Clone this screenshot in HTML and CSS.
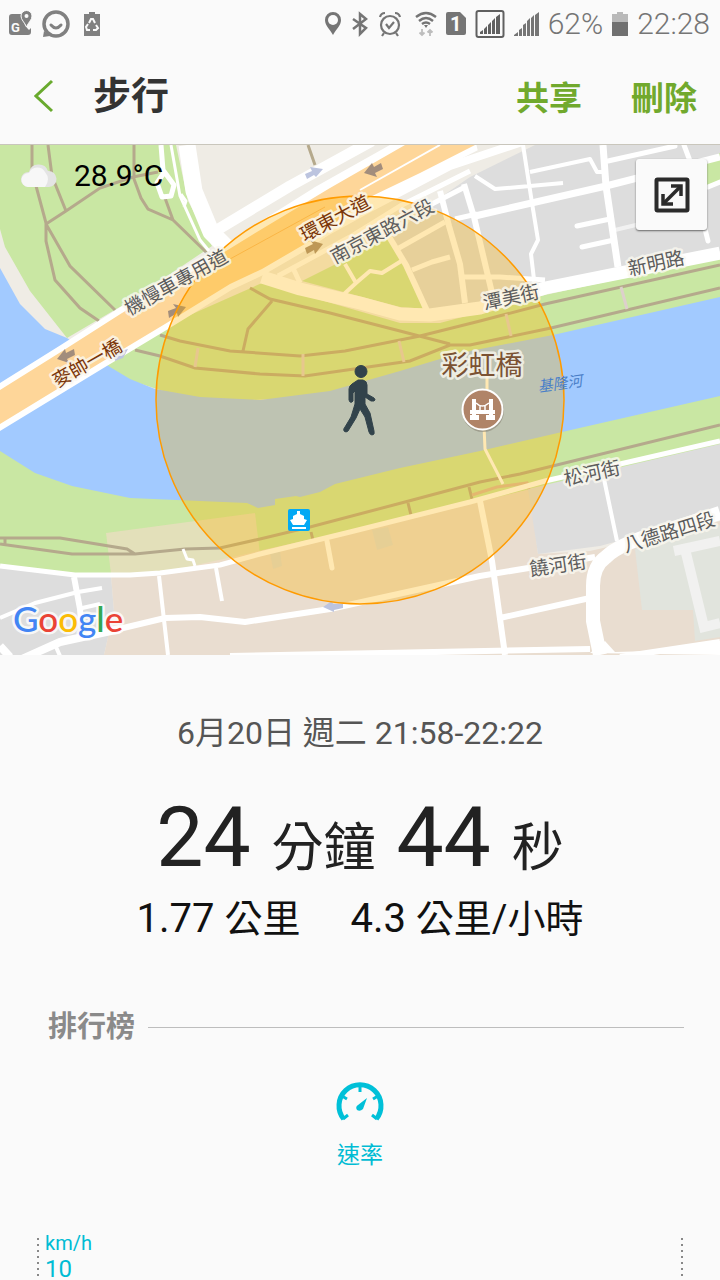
FILE: index.html
```
<!DOCTYPE html>
<html lang="zh-Hant">
    <head>
        <meta charset="utf-8">
        <meta name="viewport" content="width=device-width, initial-scale=1">
        <title>步行</title>
        <link rel="stylesheet" href="styles.css">
    </head>
    <body>
        <div class="status-bar">
            <div class="status-group notifications">
                <svg width="24" height="28" viewBox="0 0 24 28" fill="#808080">
                    <path d="M3 4h12v3c-1 5 1 9 5 13l2-2v4q0 3-3 3H3q-3 0-3-3V7q0-3 3-3z"/>
                    <path d="M17.500 0.500a5.500 5.500 0 0 1 5.500 5.500c0 4-3.500 6-5.500 11-2-5-5.500-7-5.500-11a5.500 5.500 0 0 1 5.500-5.500z" stroke="#fafafa" stroke-width="1"/>
                    <circle cx="17.500" cy="6" r="2" fill="#fafafa"/>
                    <text class="icon-letter" x="2" y="22" font-size="13">G</text>
                </svg>
                <svg width="30" height="28" viewBox="0 0 30 28" fill="none" stroke="#808080">
                    <circle cx="15" cy="14" r="12" stroke-width="3.500"/>
                    <path d="M10 15q5 6 10 0" stroke-width="3" stroke-linecap="round"/>
                    <path d="M3 21l-1 6 7-1z" fill="#808080" stroke="none"/>
                </svg>
                <svg width="18" height="28" viewBox="0 0 18 28">
                    <path d="M1 4h5V2h6v2h5v22H1z" fill="#808080"/>
                    <path d="M6 13l2-4h2l2 4M13 15l2 3-2 2h-3M7 20H4l-1-3 2-3" fill="none" stroke="#fafafa" stroke-width="2"/>
                </svg>
            </div>
            <div class="status-group">
                <svg width="18" height="26" viewBox="0 0 18 26">
                    <path d="M9 1a8 8 0 0 1 8 8c0 6-5 9-8 15C6 18 1 15 1 9a8 8 0 0 1 8-8z" fill="#757575"/>
                    <circle cx="9" cy="9" r="5" fill="#fafafa"/>
                </svg>
                <svg width="18" height="26" viewBox="0 0 18 26" fill="none" stroke="#757575" stroke-width="2.500">
                    <path d="M2 8l13 9-6 6V3l6 5L2 18"/>
                </svg>
                <svg width="24" height="26" viewBox="0 0 24 26" fill="none" stroke="#757575" stroke-width="2.200">
                    <circle cx="12" cy="14" r="9"/>
                    <path d="M8 13l3 4 5-6M2 6q1-4 5-4M22 6q-1-4-5-4M6 22l-2 3M18 22l2 3"/>
                </svg>
                <svg class="wifi" width="22" height="26" viewBox="0 0 22 26" fill="none" stroke="#757575" stroke-width="2.400">
                    <path d="M1 6q10-8 20 0M4 10q7-6 14 0M7 13q4-3 8 0"/>
                    <path d="M9 14h4l-2 3z" fill="#757575" stroke="none"/>
                    <path d="M7 18v6M4.500 21.500L7 24l2.500-2.500M15 25v-6M12.500 21.500L15 19l2.500 2.500" stroke="#bdbdbd" stroke-width="1.800"/>
                </svg>
                <svg width="20" height="26" viewBox="0 0 20 26">
                    <path d="M2 1h12l6 6v15q0 2-2 2H2q-2 0-2-2V3q0-2 2-2z" fill="#757575"/>
                    <text class="icon-letter" x="4" y="20" font-size="20">1</text>
                </svg>
                <svg width="30" height="30" viewBox="0 0 30 30">
                    <rect x="1.500" y="2" width="27" height="26" rx="2" fill="none" stroke="#606060" stroke-width="2"/>
                    <path d="M5 25v-2l3-2v4zM9 25v-5l3-3v8zM13 25v-9l3-3v12zM17 25V12l3-3v16zM21 25V8l4-3v20z" fill="#606060"/>
                </svg>
                <svg width="25" height="26" viewBox="0 0 25 26">
                    <path d="M0 25v-1l4-3v4zM5 25v-6l3-2v8zM9 25V14l3-2v13zM13 25v-15l3-3v18zM17 25V7l3-3v21zM21 25V4l4-3v24z" fill="#757575"/>
                </svg>
                <span>62%</span>
                <svg width="16" height="26" viewBox="0 0 16 26">
                    <path d="M0 3h5V1h6v2h5v9H0z" fill="#b9b9b9"/>
                    <path d="M0 11h16v14H0z" fill="#707070"/>
                </svg>
                <span>22:28</span>
            </div>
        </div>

        <header class="app-bar">
            <button class="back" aria-label="返回">
                <svg width="20" height="34" viewBox="0 0 20 34">
                    <path d="M18 2L2 17l16 15" fill="none" stroke="#69aa2e" stroke-width="3"/>
                </svg>
            </button>
            <h1>步行</h1>
            <button class="action">共享</button>
            <button class="action">刪除</button>
        </header>

        <section class="map">
            <svg class="map-drawing" viewBox="0 144 720 510">
                <rect y="144" width="720" height="510" fill="#efece5"/>

                <!-- land -->
                <path class="park" d="M0 144H176L188 200 212 245 130 300 67 337 30 290 5 246 0 228z"/>
                <path class="block" d="M470 176L535 144H720V250L545 287 430 316 380 246 428 205z"/>
                <path class="park" d="M302 280L390 236 428 308 400 306z"/>
                <path class="park" d="M90 360L165 325 262 282 400 322 440 322 545 294 720 256V300L470 352 400 372 340 394 200 402 120 376z"/>
                <path class="park" d="M707 158L720 152V181L707 184z"/>
                <path class="park" d="M0 445L130 490 260 500 335 480 720 390V445L470 505 220 566 130 576 75 576 0 567z"/>
                <path class="block" d="M0 565L75 574 111 574 114 610 104 654H0z"/>
                <path class="sand" d="M111 574L160 572 470 503 530 488 538 553 590 550 720 520V654H104L114 610z"/>
                <path class="block" d="M528 488L720 443V512L600 545 538 553z"/>
                <path d="M635 548L720 524V636L695 640 693 609H642z" fill="#e1e4dd"/>
                <path d="M106 532L255 512 260 553 160 573 111 573z" fill="#eeddc3" opacity=".7"/>
                <path d="M270 552l10-2 2 15-9 3zM372 529l16-3 5 18-16 5z" fill="#dcdcd6"/>

                <!-- river -->
                <path class="water" d="M0 267L20 303 45 328 67 337 110 366 130 378 155 388 200 396 260 399 330 390 400 370 440 358 470 350 553 334 720 296V395L562 431 480 450 400 467 335 483 320 491 300 496 296 495 275 498V504L258 507 247 502 200 500 130 497 72 485 35 472 0 450z"/>

                <!-- footpaths -->
                <g class="footpath">
                    <path d="M32 144V170L46 222V240L55 279 80 307 99 320M48 144L52 175 66 210M46 223L66 210 100 187 133 176 158 171M134 144V178L141 197 148 208 173 219 207 252M46 223L70 265 115 309M165 197L173 219M308 144L315 164"/>
                    <path d="M160 334L180 340 230 350 300 355 345 350 420 335 480 320 545 303 720 264M135 349L160 355 195 367 260 373 305 375 410 360 450 344 470 344 551 327 720 287M250 287L270 298 330 312 400 330 450 343M272 300L248 328 243 350"/>
                    <path d="M0 537H60L127 548 135 553M0 543L72 553H135L185 548 220 547 260 538 310 526 405 501 480 481 520 473 720 424M5 538v6M311 531l2 8M408 502l3 12M469 486l3 12"/>
                </g>
                <path d="M303 353v22M198 347l-3 19M399 340l5 21M506 313l5 22M621 286l6 22" fill="none" stroke="#ddd0cb" stroke-width="3"/>
                <path d="M472 494l25-8 30-4 2 6" fill="none" stroke="#d8b9a0" stroke-width="3"/>

                <!-- streets -->
                <g class="street">
                    <path stroke-width="13" d="M262 276L300 288 360 302 400 313 430 314 480 307 545 287 720 252"/>
                    <path stroke-width="17" d="M187 144L194 190 211 231 236 256"/>
                    <path stroke-width="5" d="M161 144L163 169 174 184 171 195 162 196 157 182 165 170"/>
                    <path stroke-width="3" d="M171 144L180 195 200 239 209 250M181 193l5 7-2 6"/>
                    <path stroke-width="11" d="M212 232L290 185 372 140"/>
                    <path stroke-width="5" d="M250 230L315 189 395 144M350 205L430 163 475 144M278 275L350 236 400 205 470 170M300 282L293 267"/>
                    <path stroke-width="8" d="M255 270L370 207 450 165 525 140"/>
                    <path stroke-width="4" d="M345 263L356 282 370 270 382 272 403 259M343 294L356 282"/>
                    <path stroke-width="6" d="M388 234L406 264 428 312M440 190L449 225 460 263 465 302M464 183L474 216 492 292"/>
                    <path stroke-width="5" d="M399 247L445 221M412 269L432 261 450 256M460 276H500L545 279M428 205L465 186M455 218l22-5"/>
                    <path stroke-width="4" d="M523 144L532 202 538 239 531 253 535 287M475 175L495 188 530 185 563 182M530 171L590 158 597 171H603"/>
                    <path stroke-width="7" d="M603 144L606 185 618 266M475 215L606 185 720 156"/>
                    <path stroke-width="5" stroke-linecap="round" d="M577 225L610 218M582 246L614 239M608 160L675 145M684 144L690 160M703 220L708 240M708 186L720 181"/>
                    <path stroke-width="4" d="M615 229L640 223" opacity=".6"/>
                    <path stroke-width="5" d="M0 565L75 574H130L160 572 220 564 260 553 350 531 470 501 545 480 620 463 720 440"/>
                    <path stroke-width="6" d="M74 576L80 608 81 620M119 628L165 617 200 616 245 621 330 608 480 575 595 556M480 500L492 560 505 654M500 617L590 597"/>
                    <path stroke-width="4" d="M159 575L168 654M216 567L222 600M0 617L35 602 78 591 102 587M78 608L100 603M56 646l4 9M604 478L617 540"/>
                    <path stroke-width="3" d="M183 548l4 10 6 1 2 6"/>
                    <path stroke-width="5" stroke-linecap="round" d="M327 540L332 567"/>
                    <path stroke-width="3" d="M487 375V390M484 425L485 448 503 483"/>
                    <path stroke-width="8" d="M22 658L60 641 120 628M0 645L10 656"/>
                    <path stroke-width="14" d="M600 654L593 620V585Q593 565 606 556 Q620 542 665 530L720 512"/>
                    <path stroke-width="6" d="M230 655L590 648M620 656L720 641"/>
                </g>
                <path d="M605 640L590 652 720 654V640L650 650 615 651z" fill="#fff"/>
                <path d="M674 550L720 540M686 552L704 626 720 622" fill="none" stroke="#f1f1f0" stroke-width="10"/>

                <!-- expressway -->
                <path d="M0 389L64 349 122 312 205 263 252 234 330 187 405 144H475L420 172 370 196 310 240 262 268 230 283 165 323 100 362 0 423z" fill="#fed699" stroke="#fff" stroke-width="12"/>
                <path d="M0 389L64 349 122 312 205 263 252 234 330 187 405 144H475L420 172 370 196 310 240 262 268 230 283 165 323 100 362 0 423z" fill="#fed699"/>
                <path d="M230 258L325 206" stroke="#f8b763" stroke-width="1"/>
                <path d="M360 189L440 144" stroke="#fff" stroke-width="2"/>

                <!-- one-way arrows -->
                <g fill="#a28d7c">
                    <path d="M57 358l8-10 1 4 8-4 1 6-8 4 2 4z"/>
                    <path d="M186 306l-8 10-1-4-8 5-1-7 8-3-3-4z"/>
                    <path d="M364 172l8-10 2 4 7-4 2 6-8 4 2 4z"/>
                    <path d="M323 243l-8 10-1-4-7 4-2-6 8-4-3-4z"/>
                </g>
                <g fill="#bcc4df">
                    <path d="M323 168l-7 8-2-2-7 4-2-5 7-3-2-4z"/>
                    <path d="M128 348l-5 9-8 3-1-5 4-4z"/>
                    <path d="M323 606l9-6 1 3h10v4l-9 2v2z"/>
                </g>

                <circle cx="360" cy="399" r="204" fill="#ffb200" fill-opacity=".3" stroke="#ff9b00" stroke-width="1.500"/>

                <!-- labels -->
                <g class="road-label">
                    <text class="major" transform="translate(87 362) rotate(-30)" dy="7">麥帥一橋</text>
                    <text transform="translate(176 281) rotate(-29)" dy="7">機慢車專用道</text>
                    <text class="major" transform="translate(335 217) rotate(-28)" dy="7">環東大道</text>
                    <text transform="translate(382 230) rotate(-28)" dy="7">南京東路六段</text>
                    <text transform="translate(511 296) rotate(-12)" dy="7">潭美街</text>
                    <text transform="translate(656 262) rotate(-12)" dy="7">新明路</text>
                    <text transform="translate(592 472) rotate(-12)" dy="7">松河街</text>
                    <text transform="translate(558 564) rotate(-8)" dy="7">饒河街</text>
                    <text transform="translate(669 531) rotate(-17)" dy="7">八德路四段</text>
                </g>
                <text class="river-label" transform="translate(560 383) rotate(-8)" dy="5">基隆河</text>
                <text class="place-label" x="482" y="374">彩虹橋</text>

                <!-- bridge marker -->
                <circle cx="483" cy="410" r="21" fill="#8a8577" opacity=".6"/>
                <circle cx="482.500" cy="408.500" r="20" fill="#b08468" stroke="#fff" stroke-width="2"/>
                <path d="M472 398h4v16h3v5h-9v-5h2zM489 398h4v16h2v5h-9v-5h3zM470 409h25v4h-25z" fill="#fff"/>
                <path d="M476 402q6 6 13 0M480 405v4M485 405v4" fill="none" stroke="#fff" stroke-width="1.500"/>

                <!-- pier marker -->
                <rect x="288" y="508" width="22" height="22" rx="2" fill="#03a9f4"/>
                <path d="M297 510h3v3l4 2v3l3 1-3 5h-11l-3-5 3-1v-3l4-2z" fill="#fff"/>
                <path d="M292 527h14" stroke="#fff" stroke-width="2"/>

                <!-- walker -->
                <g class="walker">
                    <circle cx="361" cy="370.500" r="6"/>
                    <path d="M358 379h5q4 1 4 5v9l7 4q2 2 0 3h-3l-6-4v7l5 9 4 18q1 4-2 4-2 0-3-3l-4-15-5-8-4 9-8 13q-2 2-4 0-1-2 1-4l6-10 4-13v-13l-2 2v8q-1 2-3 1l-1-2v-11q0-3 3-5z"/>
                </g>

                <text class="google" x="13" y="631"><tspan fill="#4285f4">G</tspan><tspan fill="#ea4335">o</tspan><tspan fill="#fbbc05">o</tspan><tspan fill="#4285f4">g</tspan><tspan fill="#34a853">l</tspan><tspan fill="#ea4335">e</tspan></text>
            </svg>
            <div class="weather">
                <svg width="38" height="26" viewBox="0 0 38 26">
                    <path d="M8 24a7 7 0 0 1 1-15 10 10 0 0 1 19-1 8 8 0 0 1 1 16z" fill="#e4e4e4"/>
                    <path d="M8 24a7 7 0 0 1 1-14 9 9 0 0 1 16-1q6 7 0 15z" fill="#f7f7f7"/>
                </svg>
                <span>28.9°C</span>
            </div>
            <button class="expand" aria-label="放大地圖">
                <svg width="36" height="36" viewBox="0 0 36 36" fill="none" stroke="#2b2b2b">
                    <rect x="2.500" y="2.500" width="31" height="31" rx="1" stroke-width="4"/>
                    <path d="M10 26L26 10" stroke-width="3.500"/>
                    <path d="M17 9h10v10M9 17v10h10" stroke-width="3.500"/>
                </svg>
            </button>
        </section>

        <section class="summary">
            <p class="date">6月20日 週二 21:58-22:22</p>
            <p class="duration">24 <span>分鐘</span> 44 <span>秒</span></p>
            <p class="metrics">
                <span>1.77 <small>公里</small></span>
                <span>4.3 <small>公里/小時</small></span>
            </p>
        </section>

        <section class="charts">
            <h2>排行榜</h2>
            <div class="speed">
                <svg width="50" height="42" viewBox="0 0 50 42">
                    <path d="M8.700 38A21 21 0 1 1 41.300 38" fill="none" stroke="#00c0d8" stroke-width="5"/>
                    <path d="M25 4v7M7 15l5 3M43 15l-5 3M8 38l5-4M42 38l-5-4" fill="none" stroke="#00c0d8" stroke-width="3"/>
                    <path d="M32 17l-4 11q-3 3-6 1-2-3 1-5z" fill="#00c0d8"/>
                </svg>
                <span>速率</span>
            </div>
            <div class="chart">
                <span class="unit">km/h</span>
                <span class="tick">10</span>
            </div>
        </section>
    </body>
</html>
```
FILE: styles.css
```
html {
    background-color: #fafafa;
}

body {
    margin: 0;
    height: 100vh;
    overflow: hidden;
    display: flex;
    flex-direction: column;
    font-family: Roboto, "Noto Sans CJK TC", sans-serif;
    color: #222;
}

button {
    padding: 0;
    border: 0;
    background: none;
    font-family: inherit;
    cursor: pointer;
}

svg {
    display: block;
    flex: none;
}

h1, h2, p {
    margin: 0;
}

/* status bar */

.status-bar {
    display: flex;
    justify-content: space-between;
    align-items: center;
    height: 48px;
    flex: none;
    padding: 0 10px 0 9px;
    box-sizing: border-box;
    font-size: 30px;
    color: #757575;
}

.status-group {
    display: flex;
    align-items: center;
    gap: 9px;
}

.notifications {
    gap: 8px;
}

.notifications svg:last-child {
    margin-left: 4px;
}

.wifi {
    margin-left: 4px;
}

.status-group span {
    font-weight: 300;
    line-height: 48px;
}

.icon-letter {
    font-family: Roboto, sans-serif;
    font-weight: 700;
    fill: #fafafa;
}

/* app bar */

.app-bar {
    display: flex;
    align-items: center;
    height: 96px;
    flex: none;
    padding: 0 23px 0 34px;
}

.app-bar h1 {
    margin-left: 39px;
    flex: 1;
    font-size: 38px;
    font-weight: 700;
    line-height: 48px;
    color: #333;
}

.action {
    margin-left: 49px;
    font-size: 33px;
    font-weight: 700;
    color: #71a92d;
}

/* map */

.map {
    position: relative;
    flex: none;
    border-top: 1px solid #c9c6bc;
}

.map-drawing {
    width: 100%;
    height: auto;
}

.park {
    fill: #c9e7a3;
}

.block {
    fill: #dddddd;
}

.sand {
    fill: #e9ddd0;
}

.water {
    fill: #a2caff;
}

.footpath {
    fill: none;
    stroke: #b5a98c;
    stroke-width: 3;
}

.street {
    fill: none;
    stroke: #fff;
    stroke-linejoin: round;
}

.walker {
    fill: #32434b;
    stroke: #32434b;
    stroke-width: 1px;
}

.road-label text, .river-label, .place-label {
    font-family: "Noto Sans CJK TC", sans-serif;
    text-anchor: middle;
    paint-order: stroke;
    stroke: rgba(250, 248, 240, .8);
    stroke-width: 5px;
    stroke-linejoin: round;
}

.road-label text {
    font-size: 19px;
    fill: #5c5c5c;
}

.road-label .major {
    fill: #7a3508;
}

.river-label {
    font-size: 15px;
    font-style: italic;
    fill: #4a7fc8;
    stroke: none;
}

.place-label {
    font-size: 27px;
    fill: #7b5233;
}

.google {
    font-family: Lato, sans-serif;
    font-size: 35px;
    font-weight: 500;
    paint-order: stroke;
    stroke: rgba(255, 255, 255, .8);
    stroke-width: 5px;
    stroke-linejoin: round;
}

.weather {
    position: absolute;
    top: 12px;
    left: 20px;
    display: flex;
    align-items: center;
    gap: 16px;
    font-size: 30px;
    line-height: 38px;
    color: #000;
}

.expand {
    position: absolute;
    top: 14px;
    right: 13px;
    display: flex;
    align-items: center;
    justify-content: center;
    width: 71px;
    height: 71px;
    background: #fafafa;
    border-radius: 3px;
    box-shadow: 0 1px 2px #666;
}

/* summary */

.summary {
    flex: none;
    padding-top: 55px;
    text-align: center;
}

.date {
    font-size: 32px;
    line-height: 46px;
    color: #555;
}

.duration {
    margin-top: 32px;
    font-size: 84px;
    line-height: 100px;
}

.duration span {
    font-size: 52px;
}

.metrics {
    display: flex;
    justify-content: center;
    gap: 50px;
    font-size: 40px;
    line-height: 40px;
    color: #111;
}

.metrics small {
    font-size: 38px;
}

/* charts */

.charts {
    flex: 1;
    display: flex;
    flex-direction: column;
    padding: 66px 36px 0;
}

.charts h2 {
    display: flex;
    align-items: center;
    gap: 13px;
    padding-left: 12px;
    font-size: 29px;
    font-weight: 700;
    line-height: 44px;
    color: #8a8a8a;
}

.charts h2::after {
    content: "";
    flex: 1;
    height: 1px;
    background: #bdbdbd;
}

.speed {
    display: flex;
    flex-direction: column;
    align-items: center;
    margin-top: 32px;
    font-size: 23px;
    line-height: 34px;
    color: #00bcd4;
}

.speed span {
    margin-top: 16px;
}

.chart {
    flex: 1;
    display: flex;
    flex-direction: column;
    margin-top: 57px;
    padding: 0 9px;
    line-height: 26px;
    color: #00bcd4;
    background:
        repeating-linear-gradient(#888 0 2px, transparent 2px 6px) 1px 8px / 2px 100% no-repeat,
        repeating-linear-gradient(#888 0 2px, transparent 2px 6px) right 1px top 8px / 2px 100% no-repeat;
}

.unit {
    font-size: 20px;
}

.tick {
    font-size: 24px;
}
```
